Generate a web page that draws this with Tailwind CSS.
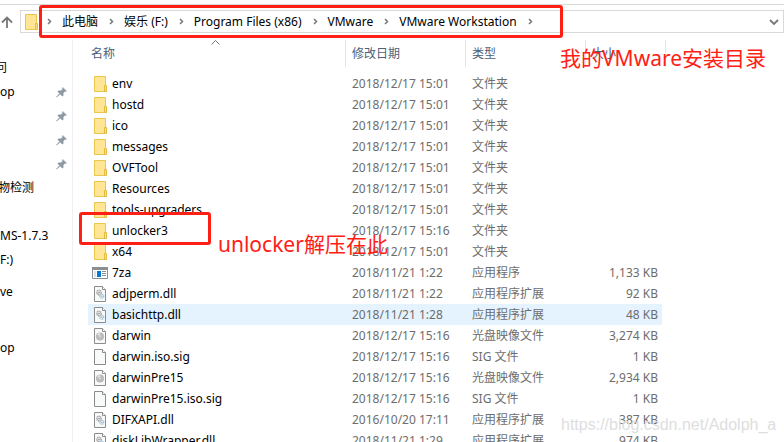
<!DOCTYPE html>
<html lang="zh-CN">

<head>
    <meta charset="UTF-8">
    <meta name="viewport" content="width=device-width, initial-scale=1.0">
    <title>VMware Workstation</title>
    <script src="https://cdn.jsdelivr.net/npm/@tailwindcss/browser@4"></script>
</head>

<body class="relative flex h-screen flex-col overflow-hidden bg-white font-['Noto_Sans','Noto_Sans_CJK_SC',sans-serif] text-[12px] leading-[20px] text-black">
    <svg class="hidden">
        <symbol id="folder" viewBox="0 0 16 16">
            <path d="M2.500 .5h11v15h-11z" fill="#ffe594" stroke="#e9c64e" />
            <path d="M12.500 9.500h2v6h-2z" fill="#ffe07c" stroke="#e3bb40" />
        </symbol>
        <symbol id="app" viewBox="0 0 16 16">
            <path d="M.5 2.500h15v11H.5z" fill="#fff" stroke="#8a8f94" />
            <path d="M0 2h16v3H0z" fill="#8a8f94" />
            <path d="M2 6h2v6H2z" fill="#dde3e8" />
            <path d="M5 6h4v6H5z" fill="#0078d7" />
            <path d="M10 6.500h4M10 8.500h4M10 10.500h4" stroke="#8a8f94" />
        </symbol>
        <symbol id="file" viewBox="0 0 16 16">
            <path d="M2.500 .5h8l3 3v12h-11z" fill="#f8f9f9" stroke="#8c8c8c" />
            <path d="M10.500 .5v3h3" fill="#fff" stroke="#8c8c8c" />
        </symbol>
        <symbol id="dll" viewBox="0 0 16 16">
            <use href="#file" />
            <circle cx="7" cy="6.500" r="2.200" fill="#eee" stroke="#9a9a9a" stroke-width="1.400" stroke-dasharray="1 .5" />
            <circle cx="7" cy="6.500" r=".8" fill="#8f8f8f" />
            <circle cx="9.700" cy="10.200" r="2" fill="#e9f4fb" stroke="#9dbdd3" stroke-width="1.300" stroke-dasharray="1 .5" />
            <circle cx="9.700" cy="10.200" r=".7" fill="#8fb2ca" />
        </symbol>
        <symbol id="iso" viewBox="0 0 16 16">
            <use href="#file" />
            <circle cx="8" cy="8.500" r="3.800" fill="#bdbdbd" stroke="#a8a8a8" stroke-width=".5" />
            <path d="M8 8.500 5.200 6.200A3.600 3.600 0 0 1 8 5z" fill="#e2e2e2" />
            <circle cx="8" cy="8.500" r=".8" fill="#ddd" />
        </symbol>
        <symbol id="pin" viewBox="0 0 12 12">
            <path d="M7.500 .5 11.500 4.500 10.500 5 9.500 4.800 7.800 6.700 7.800 9.200 7 10 4.600 7.600 1 11 .6 10.800 3.900 7 2 5 2.800 4.200 5.200 4.200 7.200 2.500 7 1.300z" fill="#8d9aa5" stroke="#8d9aa5" stroke-width=".6" />
        </symbol>
        <symbol id="sep" viewBox="0 0 9 9">
            <path d="M3 2 5.500 4.500 3 7" fill="none" stroke="#777" stroke-width="1.500" />
        </symbol>
    </svg>

    <div class="h-[5px] shrink-0 border-b border-[#dadada]"></div>

    <!-- address bar -->
    <header class="mt-[5px] flex h-[23px] shrink-0 items-center">
        <button type="button" aria-label="上移" class="flex w-5 shrink-0 justify-start pl-px">
            <svg class="h-3 w-3" viewBox="0 0 12 12" fill="none" stroke="#777" stroke-width="1.800">
                <path d="M6 12V1.500M1 6.500l5-5 5 5" />
            </svg>
        </button>
        <nav class="flex h-full flex-1 items-center border border-[#d9d9d9] pl-[2px]">
            <svg class="mr-[6px] h-4 w-4 shrink-0"><use href="#folder" /></svg>
            <div id="crumbs" class="flex flex-1 items-center whitespace-nowrap"></div>
            <button type="button" aria-label="展开" class="px-1">
                <svg class="h-2 w-[10px]" viewBox="0 0 10 8" fill="none" stroke="#777" stroke-width="1.800">
                    <path d="M1 2l4 4 4-4" />
                </svg>
            </button>
        </nav>
    </header>

    <main class="mt-[7px] flex min-h-0 flex-1">
        <aside class="w-[73px] shrink-0 overflow-hidden border-r border-[#f0f0f0] pt-4 whitespace-nowrap">
            <ul id="places"></ul>
        </aside>

        <section class="flex-1 overflow-hidden pl-[15px]">
            <table class="w-[574px] table-fixed border-collapse text-left text-[#6d6d6d]">
                <thead>
                    <tr class="text-[#4c607a]">
                        <th class="relative h-[33px] w-[258px] p-0 align-top font-normal">
                            <button type="button" class="h-[27px] w-full border-r border-[#e5e5e5] pl-[3px] text-left">名称</button>
                            <svg class="absolute top-0 left-[123px] h-[5px] w-[9px]" viewBox="0 0 9 5" fill="none" stroke="#777">
                                <path d="M.5 4.500l4-4 4 4" />
                            </svg>
                        </th>
                        <th class="w-[120px] p-0 align-top font-normal">
                            <button type="button" class="h-[27px] w-full border-r border-[#e5e5e5] pl-[6px] text-left">修改日期</button>
                        </th>
                        <th class="w-[120px] p-0 align-top font-normal">
                            <button type="button" class="h-[27px] w-full border-r border-[#e5e5e5] pl-[6px] text-left">类型</button>
                        </th>
                        <th class="p-0 align-top font-normal">
                            <button type="button" class="h-[27px] w-20 border-r border-[#e5e5e5] pl-[6px] text-left">大小</button>
                        </th>
                    </tr>
                </thead>
                <tbody id="files"></tbody>
            </table>
        </section>
    </main>

    <!-- annotations -->
    <div class="absolute top-[5px] left-[39px] h-[33px] w-[524px] rounded-[3px] border-3 border-[#ff2015]"></div>
    <div class="absolute top-[212px] left-[79px] h-[33px] w-[132px] rounded-[3px] border-3 border-[#ff2015]"></div>
    <p class="absolute top-[44px] left-[560px] text-[21px] leading-[28px] whitespace-nowrap text-[#ff2015]">我的VMware安装目录</p>
    <p class="absolute top-[230px] left-[218px] text-[21px] leading-[28px] whitespace-nowrap text-[#ff2015]">unlocker解压在此</p>
    <p class="absolute top-[415px] left-[561px] font-['Liberation_Sans',sans-serif] text-[16px] leading-[20px] whitespace-nowrap text-[#dedede]">https://blog.csdn.net/Adolph_a</p>

    <script>
        const crumbs = ['此电脑', '娱乐 (F:)', 'Program Files (x86)', 'VMware', 'VMware Workstation'];
        const sep = '<svg class="h-[9px] w-[9px] shrink-0"><use href="#sep" /></svg>';
        document.getElementById('crumbs').innerHTML =
            sep + crumbs.map(c => `<a href="#" class="pr-[9px] pl-2">${c}</a>${sep}`).join('');

        // [label, pinned, label class, row class]
        const places = [
            ['问', false, '-ml-[5px]', ''],
            ['op', true, '', ''],
            ['', true, '', ''],
            ['', true, '', ''],
            ['', true, '', ''],
            ['物检测', false, '-ml-[2px]', ''],
            ['', false, '', ''],
            ['MS-1.7.3', false, '', ''],
            ['F:)', false, '', ''],
            ['ve', false, '', 'mt-2'],
            ['op', false, '', 'mt-8'],
        ];
        document.getElementById('places').innerHTML = places.map(([label, pinned, cls, row]) => `
            <li class="flex h-6 items-center justify-between pr-[5px] ${row}">
                ${label ? `<a href="#" class="${cls}">${label}</a>` : ''}
                ${pinned ? '<svg class="ml-auto h-[11px] w-[11px]"><use href="#pin" /></svg>' : ''}
            </li>`).join('');

        const files = [
            ['folder', 'env', '2018/12/17 15:01', '文件夹', ''],
            ['folder', 'hostd', '2018/12/17 15:01', '文件夹', ''],
            ['folder', 'ico', '2018/12/17 15:01', '文件夹', ''],
            ['folder', 'messages', '2018/12/17 15:01', '文件夹', ''],
            ['folder', 'OVFTool', '2018/12/17 15:01', '文件夹', ''],
            ['folder', 'Resources', '2018/12/17 15:01', '文件夹', ''],
            ['folder', 'tools-upgraders', '2018/12/17 15:01', '文件夹', ''],
            ['folder', 'unlocker3', '2018/12/17 15:16', '文件夹', ''],
            ['folder', 'x64', '2018/12/17 15:01', '文件夹', ''],
            ['app', '7za', '2018/11/21 1:22', '应用程序', '1,133 KB'],
            ['dll', 'adjperm.dll', '2018/11/21 1:22', '应用程序扩展', '92 KB'],
            ['dll', 'basichttp.dll', '2018/11/21 1:28', '应用程序扩展', '48 KB'],
            ['iso', 'darwin', '2018/12/17 15:16', '光盘映像文件', '3,274 KB'],
            ['file', 'darwin.iso.sig', '2018/12/17 15:16', 'SIG 文件', '1 KB'],
            ['iso', 'darwinPre15', '2018/12/17 15:16', '光盘映像文件', '2,934 KB'],
            ['file', 'darwinPre15.iso.sig', '2018/12/17 15:16', 'SIG 文件', '1 KB'],
            ['dll', 'DIFXAPI.dll', '2016/10/20 17:11', '应用程序扩展', '387 KB'],
            ['dll', 'diskLibWrapper.dll', '2018/11/21 1:29', '应用程序扩展', '974 KB'],
        ];
        document.getElementById('files').innerHTML = files.map(([icon, name, date, type, size]) => `
            <tr class="h-[21px] ${name === 'basichttp.dll' ? 'bg-[#e5f3ff]' : ''}">
                <td class="p-0"><span class="flex items-center gap-1 pl-1 text-black"><svg class="h-4 w-4"><use href="#${icon}" /></svg>${name}</span></td>
                <td class="p-0 pl-[6px]">${date}</td>
                <td class="p-0 pl-[6px]">${type}</td>
                <td class="p-0 pr-1 text-right">${size}</td>
            </tr>`).join('');
    </script>
</body>

</html>
